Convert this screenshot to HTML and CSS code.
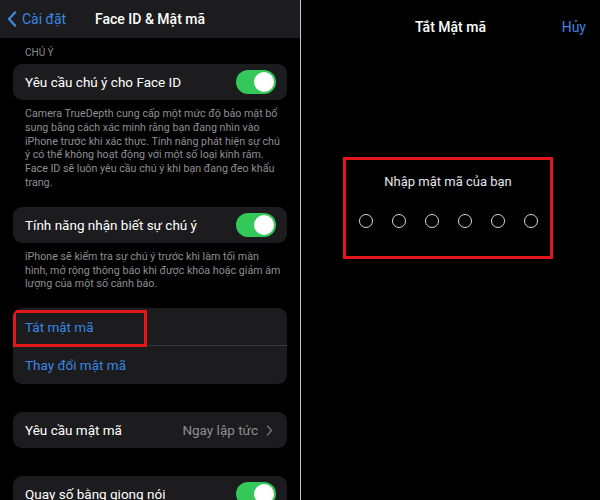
FILE: index.html
```html
<!DOCTYPE html>
<html lang="vi">
<head>
    <meta charset="UTF-8">
    <meta name="viewport" content="width=device-width, initial-scale=1.0">
    <title>Face ID &amp; Mật mã</title>
    <link rel="stylesheet" href="styles.css">
</head>
<body>
    <div class="screens">

        <!-- Settings screen -->
        <div class="settings">
            <div class="nav">
                <a class="back" href="#">
                    <svg width="10" height="16" viewBox="0 0 10 16"><polyline points="8,1.5 2,8 8,14.5" fill="none" stroke="#3a86e0" stroke-width="2.4" stroke-linecap="round" stroke-linejoin="round"/></svg>
                    Cài đặt
                </a>
                <div class="nav-title">Face ID &amp; Mật mã</div>
                <div></div>
            </div>

            <div class="section-label">CHÚ Ý</div>
            <div class="card">
                <div class="row">
                    <span>Yêu cầu chú ý cho Face ID</span>
                    <span class="toggle"></span>
                </div>
            </div>
            <p class="footnote">Camera TrueDepth cung cấp một mức độ bảo mật bổ<br>sung bằng cách xác minh rằng bạn đang nhìn vào<br>iPhone trước khi xác thực. Tính năng phát hiện sự chú<br>ý có thể không hoạt động với một số loại kính râm.<br>Face ID sẽ luôn yêu cầu chú ý khi bạn đang đeo khẩu<br>trang.</p>

            <div class="card card-gap">
                <div class="row">
                    <span>Tính năng nhận biết sự chú ý</span>
                    <span class="toggle"></span>
                </div>
            </div>
            <p class="footnote">iPhone sẽ kiểm tra sự chú ý trước khi làm tối màn<br>hình, mở rộng thông báo khi được khóa hoặc giảm âm<br>lượng của một số cảnh báo.</p>

            <div class="card card-gap">
                <div class="row link marked">
                    <span>Tắt mật mã</span>
                    <span class="mark"></span>
                </div>
                <div class="row link tall">
                    <span>Thay đổi mật mã</span>
                </div>
            </div>

            <div class="card group-gap">
                <div class="row">
                    <span>Yêu cầu mật mã</span>
                    <span class="detail">Ngay lập tức
                        <svg width="7" height="11" viewBox="0 0 7 11"><polyline points="1.5,1 5.5,5.5 1.5,10" fill="none" stroke="#6e6e73" stroke-width="1.5" stroke-linecap="round" stroke-linejoin="round"/></svg>
                    </span>
                </div>
            </div>

            <div class="card group-gap">
                <div class="row">
                    <span>Quay số bằng giọng nói</span>
                    <span class="toggle"></span>
                </div>
            </div>
        </div>

        <div class="divider"></div>

        <!-- Passcode screen -->
        <div class="passcode">
            <div class="nav plain">
                <div></div>
                <div class="nav-title">Tắt Mật mã</div>
                <a class="cancel" href="#">Hủy</a>
            </div>

            <div class="entry">
                <div class="prompt">Nhập mật mã của bạn</div>
                <div class="dots">
                    <span></span><span></span><span></span>
                    <span></span><span></span><span></span>
                </div>
            </div>
        </div>

    </div>
</body>
</html>
```

FILE: styles.css
```css
body {
    margin: 0;
    background-color: #000;
    font-family: Roboto, "Noto Sans", sans-serif;
    color: #fff;
}
.screens {
    display: flex;
    width: 600px;
    height: 500px;
    overflow: hidden;
}
.settings {
    width: 300px;
    background-color: #000;
}
.divider {
    width: 1px;
    background-color: #c8c8c8;
}
.passcode {
    flex: 1;
    background-color: #000;
}

/* nav bars */
.nav {
    height: 38px;
    background-color: #1c1c1e;
    display: grid;
    grid-template-columns: 1fr auto 1fr;
    align-items: center;
}
.nav.plain {
    height: 54px;
    background-color: #000;
}
.nav-title {
    font-size: 14px;
    font-weight: 500;
}
.back {
    display: flex;
    align-items: center;
    gap: 5px;
    padding-left: 7px;
    color: #3a86e0;
    font-size: 14px;
    text-decoration: none;
}
.cancel {
    justify-self: end;
    padding-right: 14px;
    color: #3a86e0;
    font-size: 14px;
    text-decoration: none;
}

/* settings list */
.section-label {
    padding: 9px 25px 5px;
    font-size: 10px;
    line-height: 12px;
    color: #8e8e93;
}
.card {
    margin: 0 13px;
    background-color: #1c1c1e;
    border-radius: 9px;
    overflow: hidden;
}
.card-gap {
    margin-top: 17px;
}
.group-gap {
    margin-top: 28px;
}
.row {
    height: 36px;
    padding: 0 11px 0 12px;
    display: flex;
    align-items: center;
    justify-content: space-between;
    font-size: 13.5px;
}
.row.tall {
    height: 38px;
}
.row.link {
    color: #3a86e0;
}
.row.marked {
    position: relative;
    height: 37px;
    border-bottom: 1px solid #38383a;
}
.mark {
    position: absolute;
    left: 0;
    top: 2px;
    width: 128px;
    height: 31px;
    border: 3px solid #e3161b;
}
.detail {
    display: flex;
    align-items: center;
    gap: 8px;
    color: #8e8e93;
    padding-right: 3px;
}
.toggle {
    position: relative;
    width: 40px;
    height: 24px;
    border-radius: 12px;
    background-color: #34c759;
}
.toggle::after {
    content: "";
    position: absolute;
    right: 2px;
    top: 2px;
    width: 20px;
    height: 20px;
    border-radius: 50%;
    background-color: #fff;
}
.footnote {
    margin: 0;
    padding: 7px 25px 0;
    font-size: 10.7px;
    line-height: 13.8px;
    color: #8e8e93;
    white-space: nowrap;
}

/* passcode entry */
.entry {
    width: 204px;
    margin: 103px 0 0 42px;
    padding: 14px 0 28px;
    border: 3px solid #e3161b;
    display: flex;
    flex-direction: column;
    align-items: center;
}
.prompt {
    font-size: 13px;
    color: #e5e5ea;
}
.dots {
    display: flex;
    gap: 19px;
    margin-top: 25px;
}
.dots span {
    width: 12px;
    height: 12px;
    border: 1.3px solid #d8d8d8;
    border-radius: 50%;
}
```
